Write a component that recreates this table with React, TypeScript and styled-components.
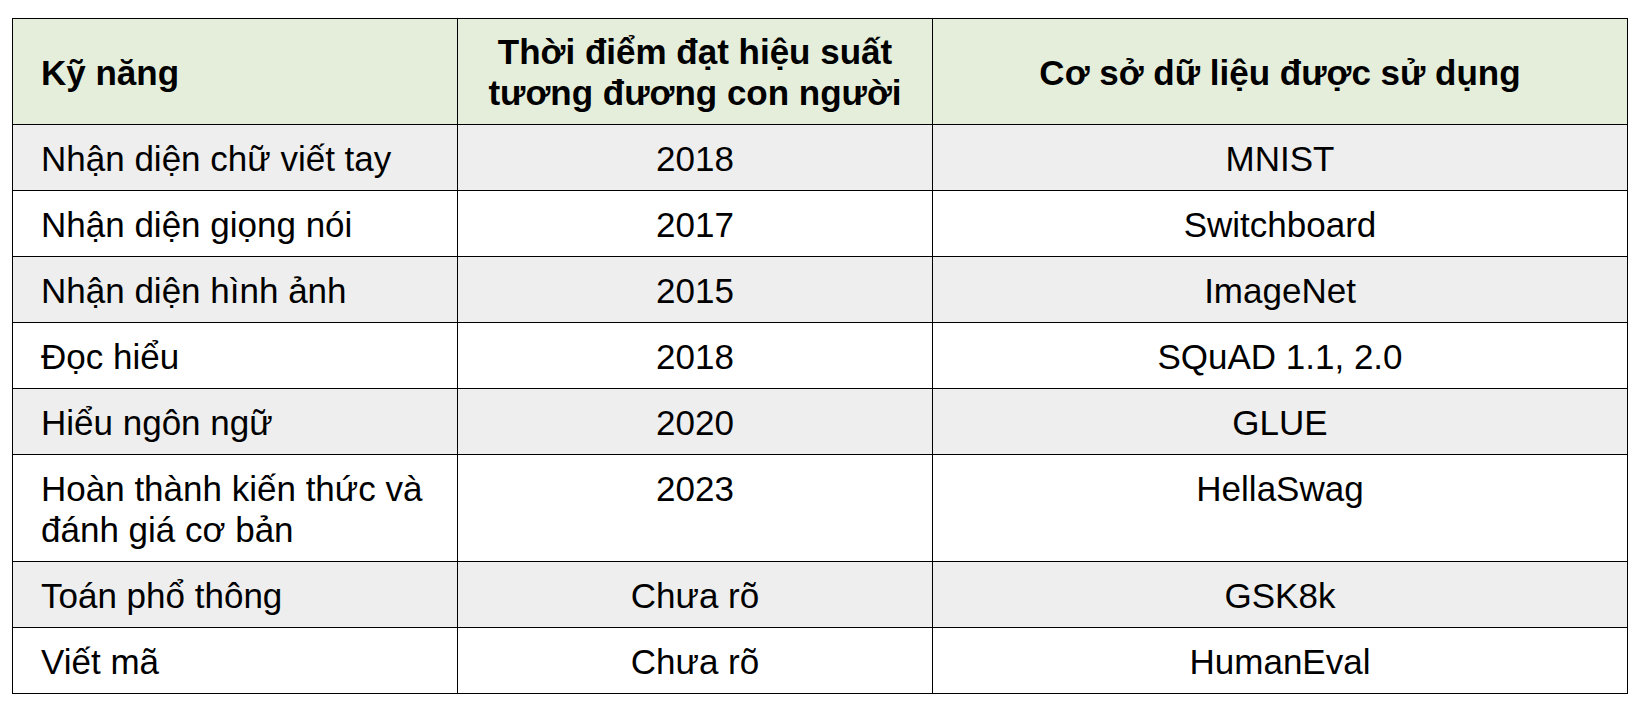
import React from "react";
import styled, { createGlobalStyle } from "styled-components";

const GlobalStyle = createGlobalStyle`
  body {
    margin: 0;
    background: #ffffff;
    font-family: "Liberation Sans", Arial, sans-serif;
    color: #000000;
  }
`;

const Page = styled.div`
  padding: 18px 0 0 12px;
`;

const Table = styled.table`
  border-collapse: collapse;
  width: 1615px;
  table-layout: fixed;
  font-size: 35px;
  line-height: 41px;
`;

const HeadRow = styled.tr`
  background: #e5eedb;
`;

const Row = styled.tr<{ $shaded: boolean }>`
  background: ${(p) => (p.$shaded ? "#eeeeee" : "#ffffff")};
`;

const HeadCell = styled.th<{ $align?: "left" | "center" }>`
  border: 1px solid #000;
  padding: 12px ${(p) => (p.$align === "left" ? "28px" : "14px")} 11px;
  text-align: ${(p) => p.$align ?? "center"};
  vertical-align: middle;
  font-weight: bold;
`;

const Cell = styled.td<{ $align?: "left" | "center" }>`
  border: 1px solid #000;
  padding: 13px ${(p) => (p.$align === "left" ? "28px" : "14px")} 11px;
  text-align: ${(p) => p.$align ?? "center"};
  vertical-align: top;
`;

const rows = [
  ["Nhận diện chữ viết tay", "2018", "MNIST"],
  ["Nhận diện giọng nói", "2017", "Switchboard"],
  ["Nhận diện hình ảnh", "2015", "ImageNet"],
  ["Đọc hiểu", "2018", "SQuAD 1.1, 2.0"],
  ["Hiểu ngôn ngữ", "2020", "GLUE"],
  ["Hoàn thành kiến thức và đánh giá cơ bản", "2023", "HellaSwag"],
  ["Toán phổ thông", "Chưa rõ", "GSK8k"],
  ["Viết mã", "Chưa rõ", "HumanEval"],
];

export default function App() {
  return (
    <>
      <GlobalStyle />
      <Page>
        <Table>
          <colgroup>
            <col style={{ width: 445 }} />
            <col style={{ width: 475 }} />
            <col style={{ width: 695 }} />
          </colgroup>
          <thead>
            <HeadRow>
              <HeadCell $align="left">Kỹ năng</HeadCell>
              <HeadCell>
                Thời điểm đạt hiệu suất tương đương con người
              </HeadCell>
              <HeadCell>Cơ sở dữ liệu được sử dụng</HeadCell>
            </HeadRow>
          </thead>
          <tbody>
            {rows.map((r, i) => (
              <Row key={r[0]} $shaded={i % 2 === 0}>
                <Cell $align="left">{r[0]}</Cell>
                <Cell>{r[1]}</Cell>
                <Cell>{r[2]}</Cell>
              </Row>
            ))}
          </tbody>
        </Table>
      </Page>
    </>
  );
}
